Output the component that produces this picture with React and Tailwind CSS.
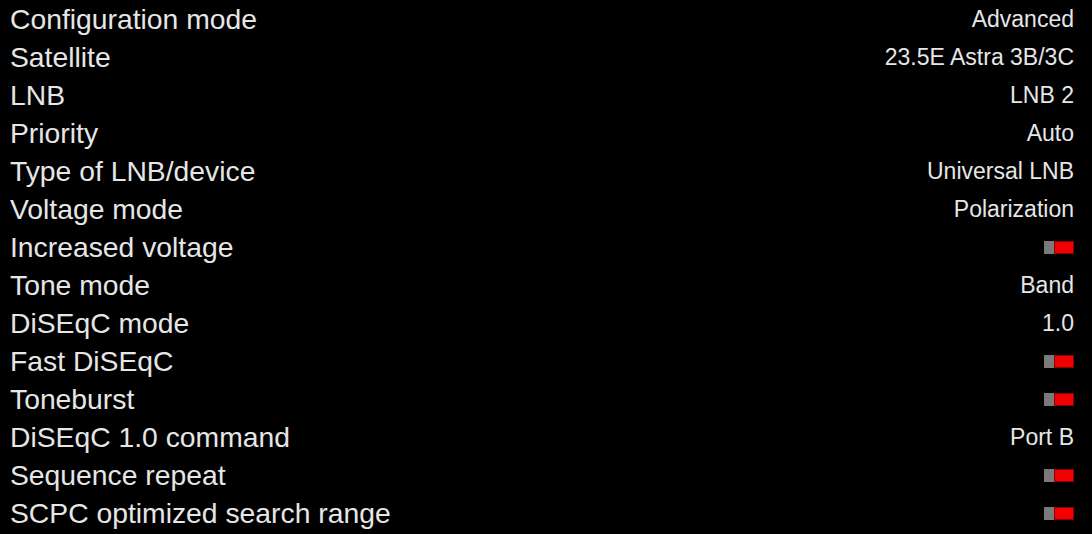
import React from "react";

const rows = [
  { label: "Configuration mode", value: "Advanced" },
  { label: "Satellite", value: "23.5E Astra 3B/3C" },
  { label: "LNB", value: "LNB 2" },
  { label: "Priority", value: "Auto" },
  { label: "Type of LNB/device", value: "Universal LNB" },
  { label: "Voltage mode", value: "Polarization" },
  { label: "Increased voltage", toggle: true },
  { label: "Tone mode", value: "Band" },
  { label: "DiSEqC mode", value: "1.0" },
  { label: "Fast DiSEqC", toggle: true },
  { label: "Toneburst", toggle: true },
  { label: "DiSEqC 1.0 command", value: "Port B" },
  { label: "Sequence repeat", toggle: true },
  { label: "SCPC optimized search range", toggle: true },
];

function Toggle() {
  return (
    <div className="flex h-[13px] w-[30px] mt-[1px]">
      <div className="w-[10px] bg-[#7a7a7a]" />
      <div className="flex-1 bg-[#f00000] border border-[#8a0000]" />
    </div>
  );
}

export default function App() {
  return (
    <div
      className="w-[1092px] h-[534px] bg-black text-[#e6e6e6] overflow-hidden"
      style={{ fontFamily: '"Liberation Sans", Arial, sans-serif' }}
    >
      {rows.map((r) => (
        <div key={r.label} className="flex items-center justify-between h-[38px] pl-[10px] pr-[18px]">
          <span className="text-[28.3px] leading-none mt-[1px]">{r.label}</span>
          {r.toggle ? (
            <Toggle />
          ) : (
            <span className="text-[23px] leading-none mt-[1px]">{r.value}</span>
          )}
        </div>
      ))}
    </div>
  );
}
